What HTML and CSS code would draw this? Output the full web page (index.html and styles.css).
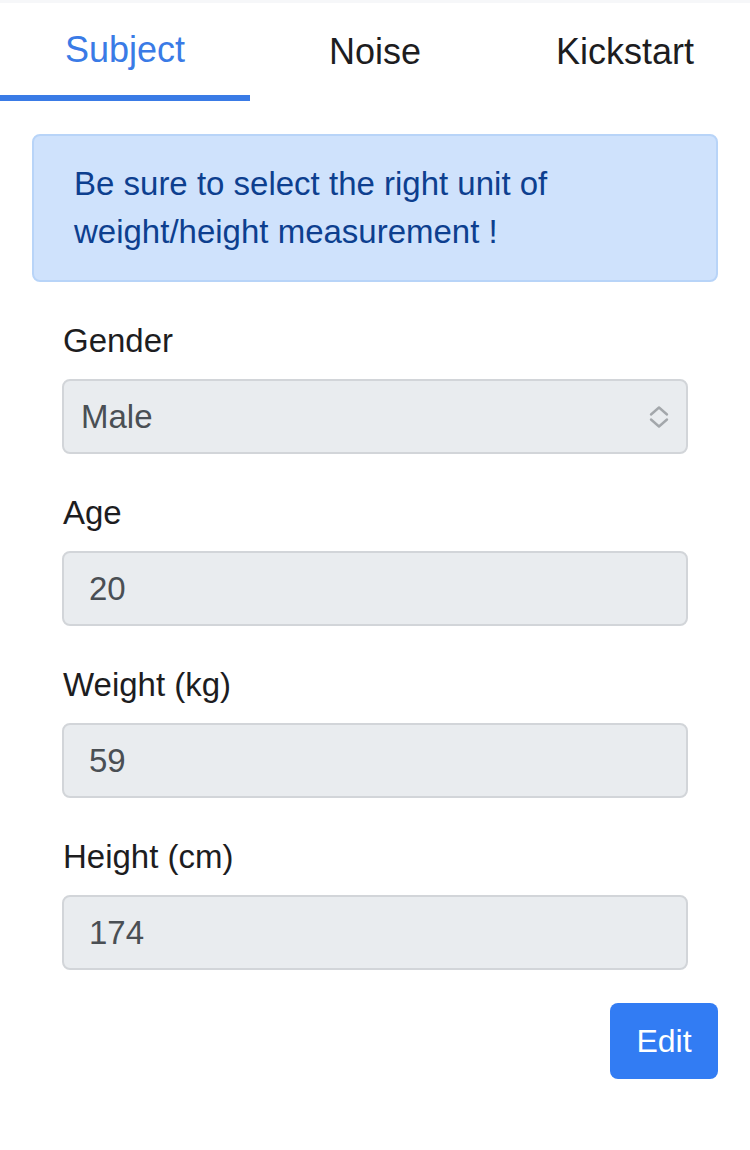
FILE: index.html
```html
<!DOCTYPE html>
<html lang="en">
<head>
<meta charset="utf-8">
<title>Subject</title>
<link rel="stylesheet" href="styles.css">
</head>
<body>
<div class="page">
  <nav class="tabs">
    <div class="tab active">Subject</div>
    <div class="tab">Noise</div>
    <div class="tab">Kickstart</div>
  </nav>
  <div class="alert">Be sure to select the right unit of weight/height measurement !</div>
  <form class="form">
    <div class="group">
      <label class="label">Gender</label>
      <div class="control select">
        <span>Male</span>
        <svg class="chev" width="22" height="24" viewBox="0 0 22 24" fill="none" stroke="#a3a7ab" stroke-width="2.4" stroke-linecap="round" stroke-linejoin="round"><path d="M3 9.5 L11 2.5 L19 9.5"/><path d="M3 14.5 L11 21.5 L19 14.5"/></svg>
      </div>
    </div>
    <div class="group">
      <label class="label">Age</label>
      <div class="control input">20</div>
    </div>
    <div class="group">
      <label class="label">Weight (kg)</label>
      <div class="control input">59</div>
    </div>
    <div class="group">
      <label class="label">Height (cm)</label>
      <div class="control input">174</div>
    </div>
    <div class="actions">
      <button type="button" class="btn">Edit</button>
    </div>
  </form>
</div>
</body>
</html>
```

FILE: styles.css
```css
* { box-sizing: border-box; }
html, body { margin: 0; padding: 0; background: #fff; }
body {
  font-family: "Liberation Sans", Arial, sans-serif;
  color: #212529;
  width: 750px;
}
.page {
  border-top: 3px solid #f6f7f9;
}
.tabs {
  display: flex;
  height: 98px;
}
.tab {
  flex: 1;
  text-align: center;
  font-size: 36px;
  line-height: 98px;
  color: #1d1d1f;
  height: 98px;
  border-bottom: 6px solid transparent;
}
.tab.active {
  color: #3a7be6;
  border-bottom-color: #3a7be6;
  line-height: 94px;
}
.alert {
  margin: 33px 32px 0;
  background: #cfe2fc;
  border: 2px solid #b8d4f8;
  border-radius: 8px;
  color: #0d3f8f;
  font-size: 33px;
  line-height: 48px;
  padding: 24px 40px;
}
.form {
  padding: 35px 62px 0;
  display: flex;
  flex-direction: column;
  gap: 35px;
}
.group {
  display: flex;
  flex-direction: column;
  gap: 14px;
}
.label {
  font-size: 33px;
  line-height: 48px;
  color: #1d1d1f;
  padding-left: 1px;
}
.control {
  height: 75px;
  background: #e9ecef;
  border: 2px solid #d2d5d9;
  border-radius: 8px;
  font-size: 33px;
  color: #4a4f54;
  display: flex;
  align-items: center;
}
.input { padding-left: 25px; }
.select {
  padding-left: 17px;
  padding-right: 16px;
  justify-content: space-between;
}
.chev { display: block; }
.actions {
  display: flex;
  justify-content: flex-end;
  margin: -2px -30px 0 0;
}
.btn {
  width: 108px;
  height: 76px;
  border: none;
  border-radius: 8px;
  background: #327cf3;
  color: #fff;
  font-family: "Liberation Sans", Arial, sans-serif;
  font-size: 32px;
  padding: 0;
}
```
